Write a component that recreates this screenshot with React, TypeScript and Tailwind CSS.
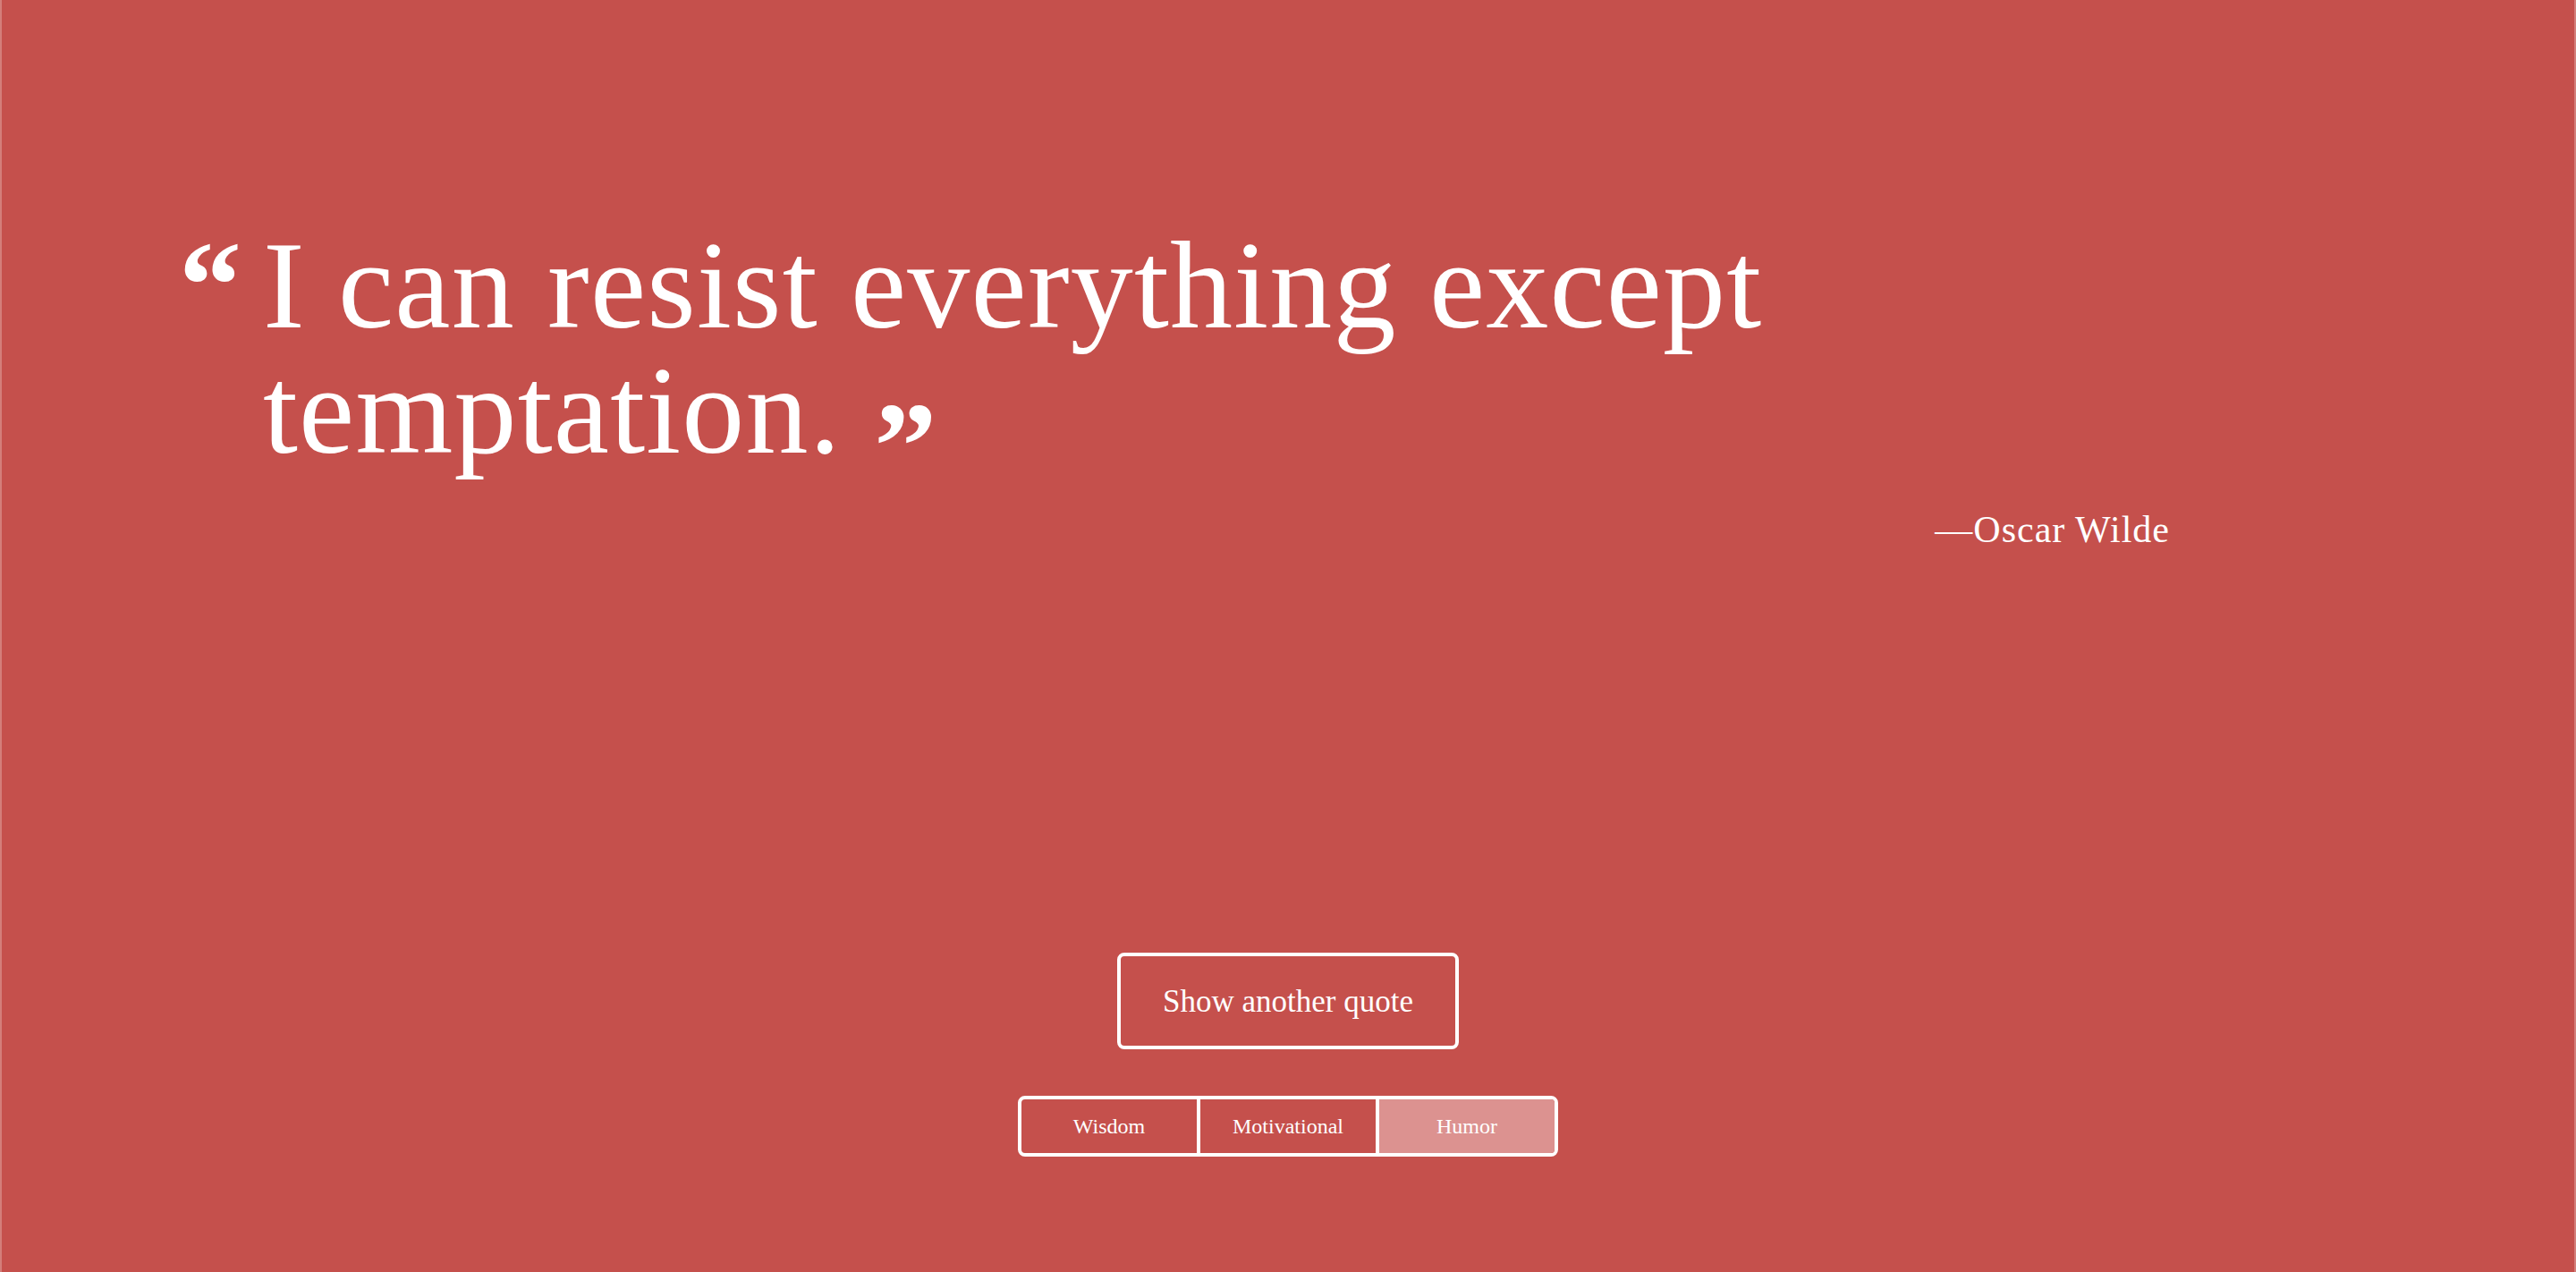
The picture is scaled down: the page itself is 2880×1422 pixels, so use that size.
import React from "react";

const serif = { fontFamily: '"Liberation Serif", "Times New Roman", serif' };

export default function App() {
  return (
    <div
      className="h-screen w-full bg-[#c5504c] border-x-2 border-[#d47e7a] text-white flex flex-col overflow-hidden"
      style={serif}
    >
      <div className="pt-[249px] pl-[198px] pr-[452px]">
        <div className="flex items-start text-[140px] leading-[140px]">
          <span className="w-[94px] shrink-0 font-bold">“</span>
          <p className="font-normal tracking-[1.2px]">
            I can resist everything except temptation.{" "}
            <span className="relative top-[40px] font-bold tracking-normal">”</span>
          </p>
        </div>
        <div className="mt-[32px] text-right text-[42px] leading-[63px] tracking-[1px]">
          —Oscar Wilde
        </div>
      </div>

      <div className="mt-auto pb-[129px] flex flex-col items-center">
        <button
          type="button"
          className="w-[382px] h-[108px] border-4 border-white rounded-lg text-[35px] leading-none text-white bg-transparent"
          style={serif}
        >
          Show another quote
        </button>
        <div className="mt-[52px] flex border-4 border-white rounded-lg overflow-hidden">
          <button
            type="button"
            className="w-[196px] h-[60px] text-[24px] leading-none text-white bg-transparent"
            style={serif}
          >
            Wisdom
          </button>
          <button
            type="button"
            className="w-[200px] h-[60px] border-l-4 border-white text-[24px] leading-none text-white bg-transparent"
            style={serif}
          >
            Motivational
          </button>
          <button
            type="button"
            className="w-[200px] h-[60px] border-l-4 border-white text-[24px] leading-none text-white bg-[#dc9290]"
            style={serif}
          >
            Humor
          </button>
        </div>
      </div>
    </div>
  );
}
